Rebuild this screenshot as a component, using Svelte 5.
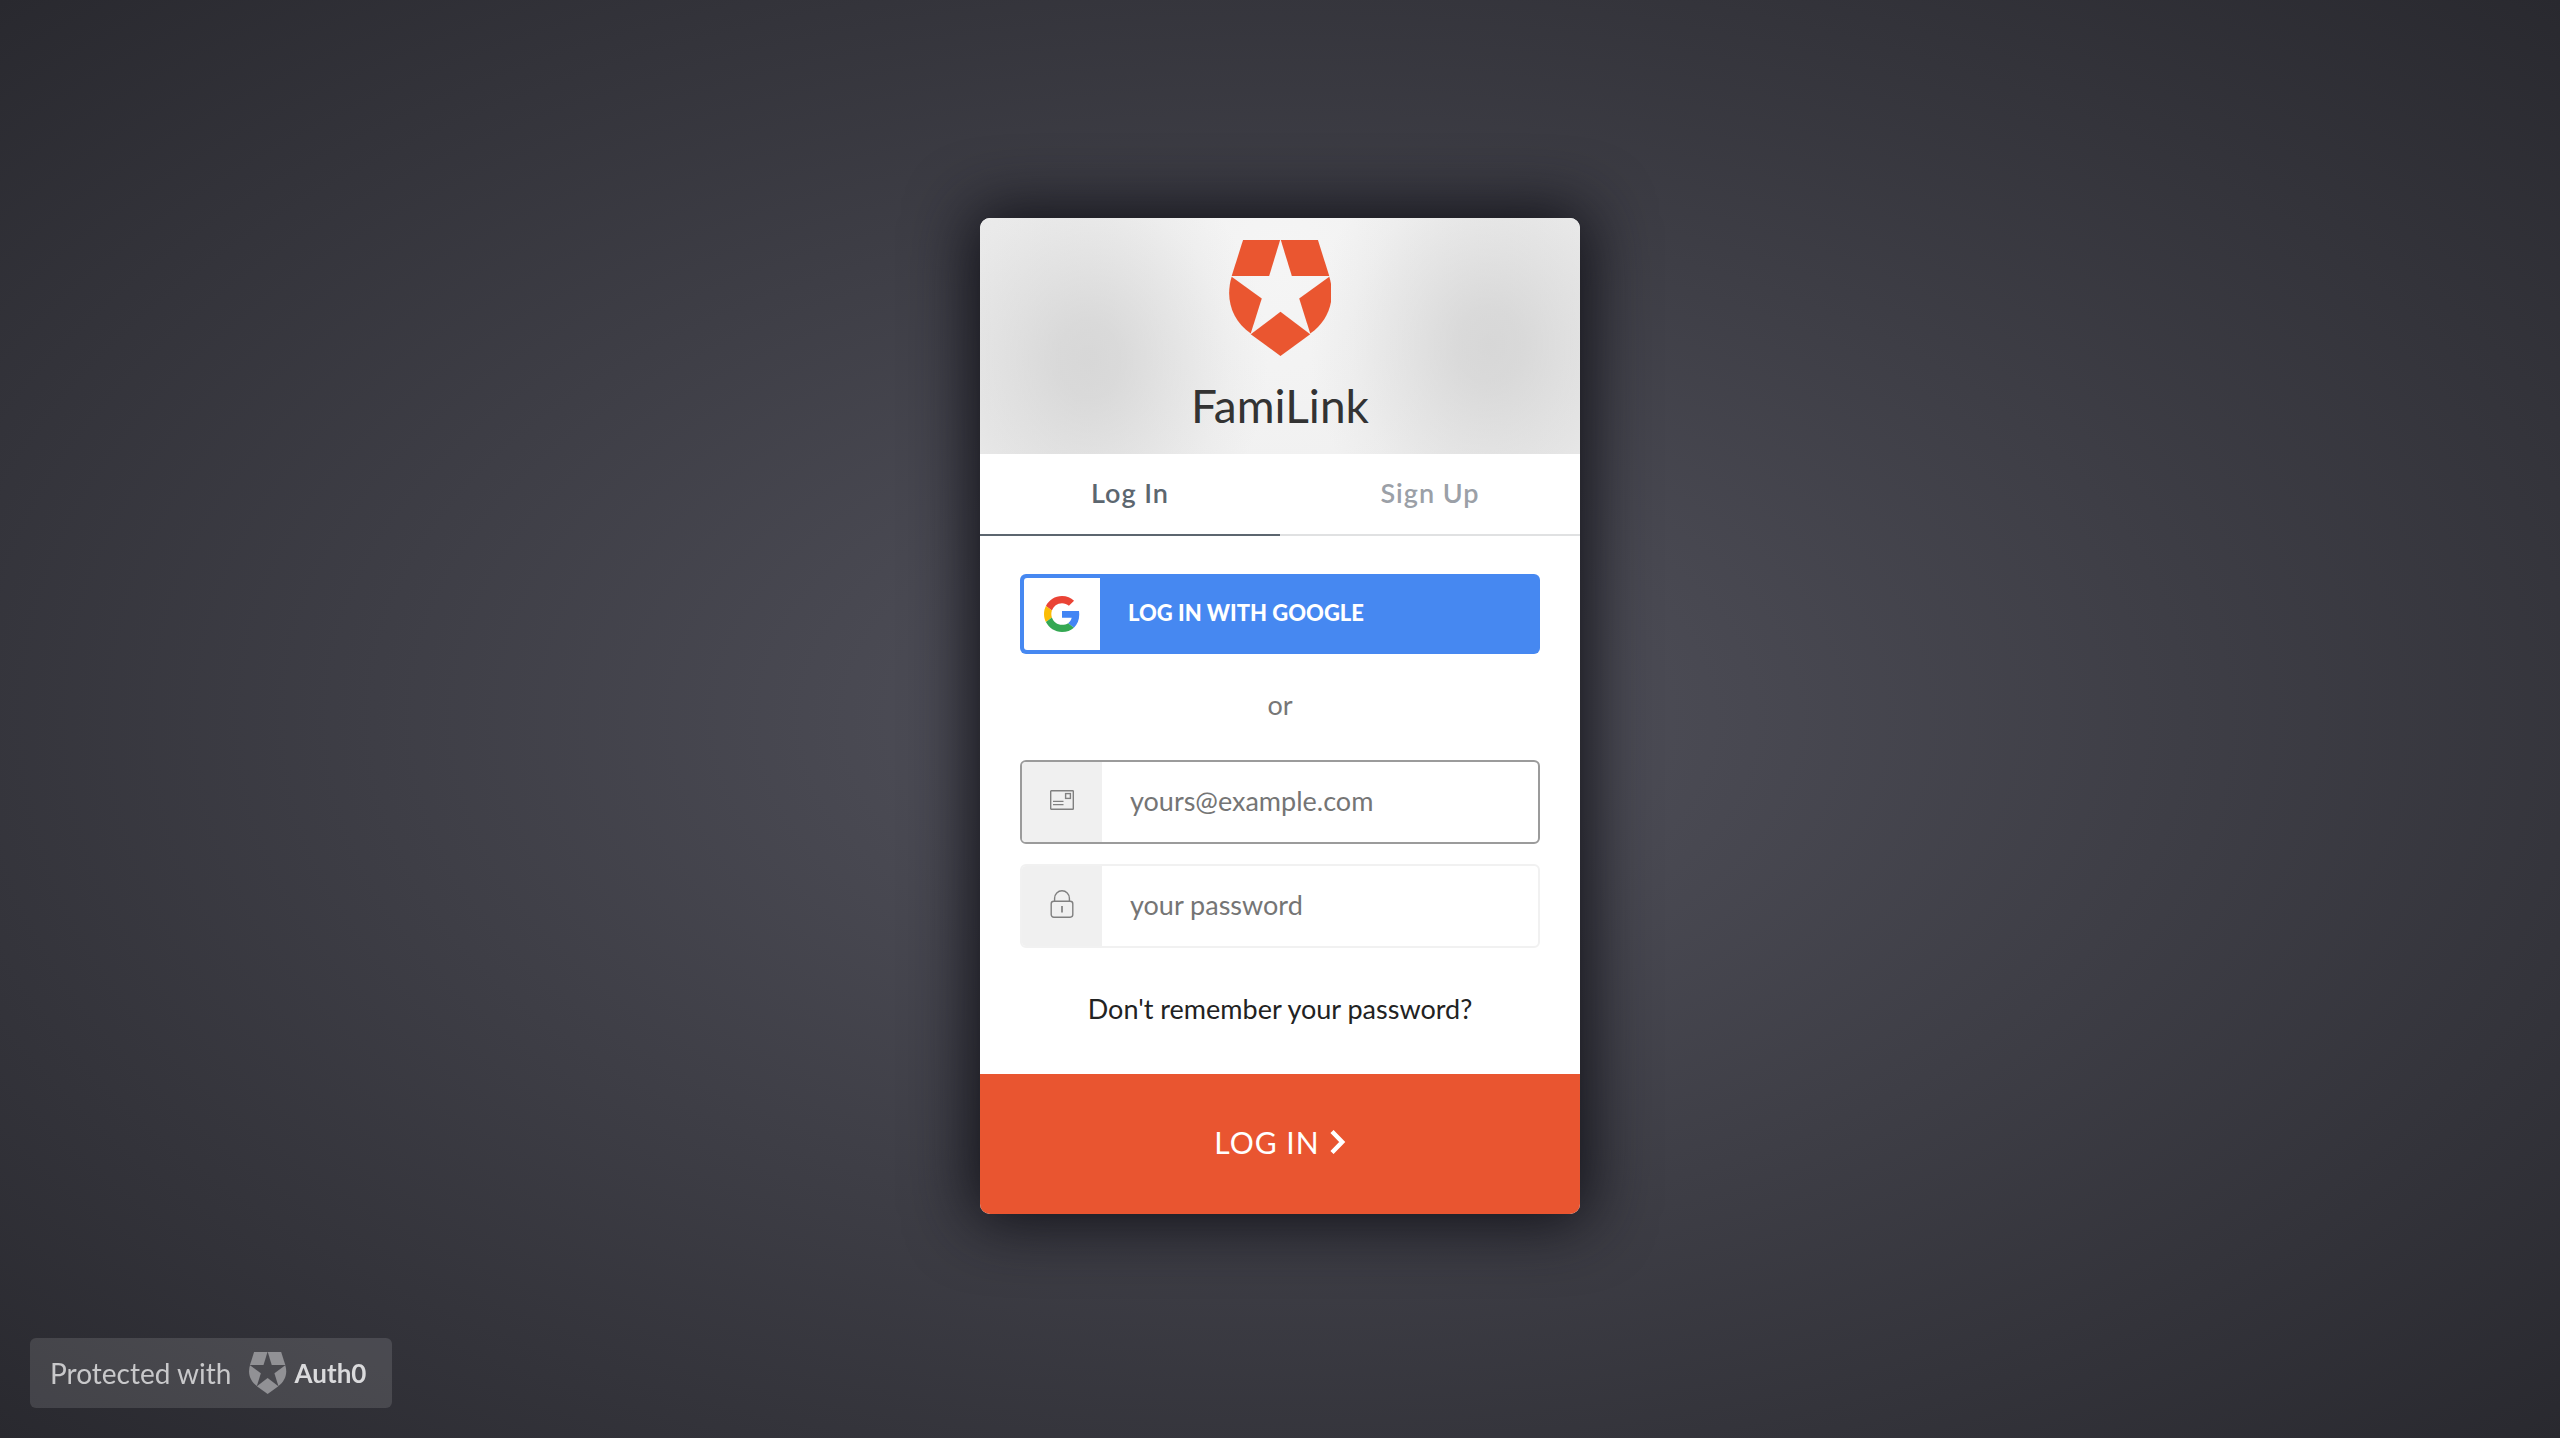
<script>
  const appName = 'FamiLink';
  const tabs = [
    { id: 'login', label: 'Log In' },
    { id: 'signup', label: 'Sign Up' }
  ];

  let activeTab = $state('login');
  let email = $state('');
  let password = $state('');

  function submit(event) {
    event.preventDefault();
  }
</script>

{#snippet shield()}
  <!-- shield with the star left empty -->
  <svg class="shield" viewBox="0 0 308 347" aria-hidden="true" fill="currentColor">
    <path d="M42 0H153L120 108H8Z" />
    <path d="M155 0H266L300 108H188Z" />
    <path d="M8 110L98 175L65 280C8 240 -12 175 8 110Z" />
    <path d="M300 110L210 175L243 280C300 240 320 175 300 110Z" />
    <path d="M154 215L243 282L154 347L65 282Z" />
  </svg>
{/snippet}

<div class="overlay">
  <main class="card">
    <header class="card-header">
      {@render shield()}
      <h1>{appName}</h1>
    </header>

    <nav class="tabs">
      {#each tabs as tab (tab.id)}
        <button
          type="button"
          class="tab"
          class:active={activeTab === tab.id}
          onclick={() => (activeTab = tab.id)}
        >
          {tab.label}
        </button>
      {/each}
    </nav>

    <form onsubmit={submit}>
      <div class="content">
        <button type="button" class="google">
          <span class="google-icon">
            <svg viewBox="0 0 48 48" aria-hidden="true">
              <path fill="#EA4335" d="M24 9.5c3.54 0 6.71 1.22 9.21 3.6l6.85-6.85C35.9 2.38 30.47 0 24 0 14.62 0 6.51 5.38 2.56 13.22l7.98 6.19C12.43 13.72 17.74 9.5 24 9.5z" />
              <path fill="#4285F4" d="M46.98 24.55c0-1.57-.15-3.09-.38-4.55H24v9.02h12.94c-.58 2.96-2.26 5.48-4.78 7.18l7.73 6c4.51-4.18 7.09-10.36 7.09-17.65z" />
              <path fill="#FBBC05" d="M10.53 28.59c-.48-1.45-.76-2.99-.76-4.59s.27-3.14.76-4.59l-7.98-6.19C.92 16.46 0 20.12 0 24c0 3.88.92 7.54 2.56 10.78l7.97-6.19z" />
              <path fill="#34A853" d="M24 48c6.48 0 11.93-2.13 15.89-5.81l-7.73-6c-2.15 1.45-4.92 2.3-8.16 2.3-6.26 0-11.57-4.22-13.47-9.91l-7.98 6.19C6.51 42.62 14.62 48 24 48z" />
            </svg>
          </span>
          <span class="google-label">LOG IN WITH GOOGLE</span>
        </button>

        <p class="separator">or</p>

        <div class="fields">
          <label class="field focused">
            <span class="field-icon">
              <svg width="24" height="20" viewBox="0 0 24 20" fill="none" stroke="currentColor" aria-hidden="true">
                <rect x="0.7" y="0.7" width="22.6" height="18.6" rx="0.6" stroke-width="1.4" />
                <rect x="15.6" y="3.6" width="4.8" height="4.8" stroke-width="1.4" />
                <path d="M3 11.3H13.5M3 14.6H13.5" stroke-width="1.3" />
              </svg>
            </span>
            <input type="email" aria-label="Email" placeholder="yours@example.com" bind:value={email} />
          </label>

          <label class="field">
            <span class="field-icon">
              <svg width="24" height="28" viewBox="0 0 24 28" fill="none" stroke="currentColor" stroke-width="1.4" aria-hidden="true">
                <rect x="1.2" y="11.2" width="21.6" height="16" rx="2.6" />
                <path d="M4.6 11V8.2a7.4 7.4 0 0 1 14.8 0V11" />
                <path d="M12 16V22.6" stroke-width="1.7" />
              </svg>
            </span>
            <input type="password" aria-label="Password" placeholder="your password" bind:value={password} />
          </label>
        </div>

        <a class="forgot" href="#reset">Don't remember your password?</a>
      </div>

      <button type="submit" class="submit">
        <span>LOG IN</span>
        <svg width="16" height="24" viewBox="0 0 16 24" fill="none" stroke="currentColor" stroke-width="4.4" aria-hidden="true">
          <path d="M2 1.5L12.2 12L2 22.5" />
        </svg>
      </button>
    </form>
  </main>

  <a class="badge" href="#auth0">
    <span>Protected with</span>
    <span class="badge-brand">
      {@render shield()}
      <strong>Auth0</strong>
    </span>
  </a>
</div>

<style>
  :global(body) {
    margin: 0;
  }

  .overlay {
    box-sizing: border-box;
    min-height: 100vh;
    padding: 16px 16px 22px;
    display: flex;
    align-items: center;
    justify-content: center;
    background: radial-gradient(#53535d, #29292f);
    font-family: Lato, 'Open Sans', sans-serif;
    font-size: 27px;
  }

  button,
  input {
    font-family: inherit;
    font-size: inherit;
    border: 0;
    padding: 0;
    background: none;
  }

  button {
    cursor: pointer;
  }

  .card {
    width: 100%;
    max-width: 600px;
    overflow: hidden;
    border-radius: 10px;
    background: #fff;
    box-shadow: 0 0 64px 8px #111118;
  }

  .card-header {
    display: flex;
    flex-direction: column;
    align-items: center;
    gap: 22px;
    padding: 22px 22px 20px;
    color: #ea5630;
    background:
      radial-gradient(ellipse 180px 210px at 18% 60%, rgba(205, 205, 205, 0.7), rgba(205, 205, 205, 0.64) 18%, rgba(205, 205, 205, 0.4) 45%, rgba(205, 205, 205, 0.12) 78%, rgba(205, 205, 205, 0)),
      radial-gradient(ellipse 180px 210px at 85% 54%, rgba(205, 205, 205, 0.7), rgba(205, 205, 205, 0.64) 18%, rgba(205, 205, 205, 0.4) 45%, rgba(205, 205, 205, 0.12) 78%, rgba(205, 205, 205, 0)),
      radial-gradient(ellipse 320px 400px at 50% 20%, #f5f5f5, #f1f1f1 50%, #ececec);
  }

  .card-header .shield {
    height: 116px;
  }

  h1 {
    margin: 0;
    font-size: 46px;
    font-weight: 400;
    line-height: 56px;
    color: #333;
  }

  .tabs {
    display: flex;
  }

  .tab {
    flex: 1;
    height: 82px;
    padding-bottom: 4px;
    border-bottom: 2px solid #e0e1e2;
    font-size: 27px;
    font-weight: 600;
    letter-spacing: 1px;
    color: #9ba0a7;
  }

  .tab.active {
    border-color: #5c666f;
    color: #5c666f;
  }

  .content {
    display: flex;
    flex-direction: column;
    padding: 38px 40px 48px;
  }

  .google {
    display: flex;
    align-items: center;
    gap: 28px;
    height: 80px;
    padding: 4px;
    border-radius: 6px;
    background: #4688f1;
    color: #fff;
  }

  .google-icon {
    display: flex;
    align-items: center;
    justify-content: center;
    width: 76px;
    height: 72px;
    border-radius: 3px 0 0 3px;
    background: #fff;
  }

  .google-icon svg {
    width: 36px;
    height: 36px;
  }

  .google-label {
    padding-bottom: 4px;
    font-size: 22px;
    font-weight: 900;
  }

  .separator {
    margin: 0;
    padding: 34px 0 38px;
    line-height: 34px;
    text-align: center;
    color: #777;
  }

  .fields {
    display: flex;
    flex-direction: column;
    gap: 20px;
  }

  .field {
    display: flex;
    height: 80px;
    overflow: hidden;
    border: 2px solid #f1f1f1;
    border-radius: 6px;
  }

  .field.focused {
    border-color: #9b9b9b;
  }

  .field-icon {
    display: flex;
    flex: none;
    align-items: center;
    justify-content: center;
    width: 80px;
    padding-bottom: 4px;
    background: #f0f0f0;
    color: #808080;
  }

  input {
    flex: 1;
    min-width: 0;
    padding: 0 28px 4px;
    outline: none;
    color: #333;
  }

  input::placeholder {
    color: #757575;
    opacity: 1;
  }

  .forgot {
    margin-top: 44px;
    line-height: 34px;
    text-align: center;
    text-decoration: none;
    color: #222;
  }

  .submit {
    display: flex;
    align-items: center;
    justify-content: center;
    gap: 10px;
    width: 100%;
    height: 140px;
    padding-bottom: 4px;
    background: #e95530;
    color: #fff;
    font-size: 30px;
    letter-spacing: 1px;
  }

  .badge {
    position: fixed;
    left: 30px;
    bottom: 30px;
    display: flex;
    align-items: center;
    gap: 18px;
    height: 70px;
    padding: 0 26px 0 20px;
    border-radius: 6px;
    background: rgba(255, 255, 255, 0.12);
    color: #c8c8ca;
    font-size: 28px;
    text-decoration: none;
  }

  .badge-brand {
    display: flex;
    align-items: center;
    gap: 8px;
    color: #919195;
  }

  .badge .shield {
    height: 42px;
  }

  .badge strong {
    font-size: 26px;
    font-weight: 700;
    color: #dadadc;
  }
</style>
